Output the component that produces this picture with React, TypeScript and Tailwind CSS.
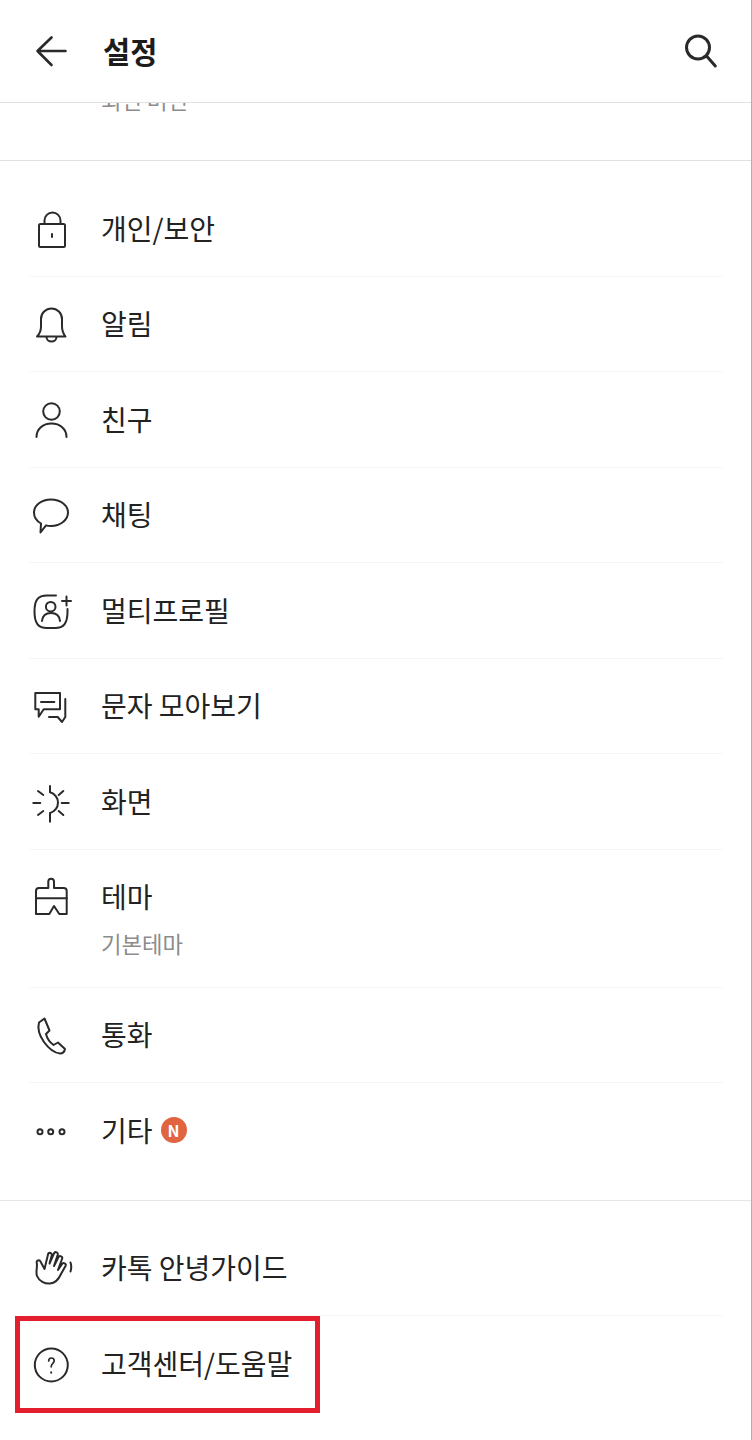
import React from 'react';

const FONT = "font-['Noto_Sans_CJK_KR','Noto_Sans',sans-serif]";

function Icon({ children }: { children: React.ReactNode }) {
  return (
    <svg width="40" height="40" viewBox="0 0 40 40" fill="none" stroke="#2a2a2a" strokeWidth="2" strokeLinecap="round" strokeLinejoin="round" className="shrink-0 overflow-visible">
      {children}
    </svg>
  );
}

const icons = {
  lock: (
    <>
      <rect x="8" y="15" width="26" height="23" rx="1.5" />
      <path d="M13.500 15v-3.500a8 8 0 0 1 16 0V15" />
      <path d="M21 25v3" />
    </>
  ),
  bell: (
    <>
      <path d="M6 32.5c2.5-2.5 4-6 4-10V15a10.5 10.5 0 0 1 21 0v7.500c0 4 1.500 7.500 3.500 10z" />
      <path d="M15.500 33a5 4.500 0 0 0 10 0" />
    </>
  ),
  person: (
    <>
      <circle cx="20.500" cy="11.500" r="8.300" />
      <path d="M5.500 37c0-8 6.500-13.500 15-13.500s15 5.500 15 13.500" />
    </>
  ),
  chat: <path d="M9.500 37.500 10 28.500C5.500 26 3 22 3 17.500 3 10.200 10.500 4.500 20 4.500s17 5.700 17 13-7.500 13.500-17 13.500c-1.800 0-3.500-.2-5-.6z" />,
  multi: (
    <>
      <path d="M25 4.500H16C7 4.500 3.500 9 3.500 20.500 3.500 32 7 37 16 37h8c9 0 12.500-5 12.500-16.500V18" />
      <path d="M35.500 5.500v9M31 10h9" />
      <circle cx="19.700" cy="15.700" r="4.800" />
      <path d="M11 30c.5-5 4-8 9-8s8.500 3 9 8" />
    </>
  ),
  message: (
    <>
      <path d="M4.300 7H29v16.300H12.700l-5 7.400V23.300H4.300z" />
      <path d="M10 16h13.300" />
      <path d="M34.300 13v18l-3.300 5-4.300-5H18" />
    </>
  ),
  sun: (
    <>
      <path d="M19 4v6.300a10.700 10.700 0 0 1 0 20.700V39.700" />
      <path d="M30.700 21h7M27.700 13l4.600-4M27.700 29l4.600 4M2.300 21h7M7 9l5.300 4M7 33l5.300-4" />
    </>
  ),
  brush: (
    <>
      <path d="M5 37V14a3 3 0 0 1 3-3h9.300V4.500a2.850 2.850 0 0 1 5.700 0V11h9.700a3 3 0 0 1 3 3v23h-7.400L23 29l-4.700 8z" />
      <path d="M5 21.300h30.700" />
    </>
  ),
  phone: <path d="M13.500 3.500 8 7.500C6.500 13 8 20 13 27c5 7 11 11 16 11.500 2.500 0 4.500-2 5-4.500l-7-6.500-4.500 2.500c-3.500-2.500-6.500-7-7.500-11l3.500-3.500z" />,
  dots: (
    <>
      <circle cx="9" cy="20.700" r="2.500" />
      <circle cx="19.700" cy="20.700" r="2.500" />
      <circle cx="31" cy="20.700" r="2.500" />
    </>
  ),
  hand: (
    <>
      <path d="M13.500 21 9.500 13.500a2 2 0 0 0-3.700 1.500C6.500 20 4.500 24 6 28c2 5 8 8 13 7.500 6-.5 9-5 11-9.500l4.500-8a2 2 0 0 0-3.600-1.800L27 22l4-11a2 2 0 0 0-3.600-1.800L23 18l3.800-11.500a2 2 0 0 0-3.600-1.500L18.500 15.500 20.800 7a2 2 0 0 0-3.600-1.300z" />
      <path d="M39.500 14.500c1 3 1 6 0 9" />
    </>
  ),
  help: (
    <>
      <circle cx="20.300" cy="21" r="16.500" />
      <path d="M17.700 17c0-2 1.200-3 2.800-3s2.700 1.200 2.700 2.800c0 2.700-3 2.700-3 6" strokeWidth="1.700" />
      <path d="M20.200 28.300v.4" strokeWidth="1.900" />
    </>
  ),
};

function Row({ icon, label, sub, badge, last }: {
  icon: React.ReactNode;
  label: string;
  sub?: string;
  badge?: boolean;
  last?: boolean;
}) {
  return (
    <div className={`ml-[29px] mr-[28px] flex items-start gap-[30px] pl-[2px] pt-[27.5px] pb-[27px] ${last ? '' : 'border-b border-[#f5f5f5]'}`}>
      <Icon>{icon}</Icon>
      <div className="flex min-w-0 flex-col">
        <div className="flex h-10 items-center gap-[8px] pb-[2px]">
          <span className="text-[28px] leading-10 text-[#222222]">{label}</span>
          {badge && (
            <span className="flex h-[26px] w-[26px] items-center justify-center rounded-full bg-[#e0643f] text-[16px] font-bold leading-none text-white">N</span>
          )}
        </div>
        {sub && <div className="mt-[10.5px] mb-[2px] text-[22.3px] leading-[30px] text-[#8c8c8c]">{sub}</div>}
      </div>
    </div>
  );
}

export default function App() {
  return (
    <div className={`${FONT} relative h-[1440px] w-[752px] overflow-hidden border-r border-[#b0b0b0] bg-white`}>
      {/* Header */}
      <div className="flex h-[103px] items-center justify-between border-b border-[#e0e0e0] pl-[31px] pr-[30px]">
        <div className="flex items-center gap-[32px]">
          <Icon>
            <path d="M20.500 6.500 6.500 20l14 14M6.500 20h28" strokeWidth="2.600" />
          </Icon>
          <span className="pb-[2px] text-[29.5px] font-bold leading-10 text-[#1c1c1c]">설정</span>
        </div>
        <Icon>
          <circle cx="17" cy="16.500" r="11.500" strokeWidth="3" />
          <path d="m26 25.500 8.300 9.500" strokeWidth="3" />
        </Icon>
      </div>

      {/* Scrolled-off row, clipped under the header */}
      <div className="h-[58px] overflow-hidden border-b border-[#e0e0e0] pl-[101px]">
        <div className="-mt-[19px] text-[22.3px] leading-[30px] text-[#8c8c8c]">최신 버전</div>
      </div>

      <div className="border-b border-[#e6e6e6] pt-5 pb-[22px]">
        <Row icon={icons.lock} label="개인/보안" />
        <Row icon={icons.bell} label="알림" />
        <Row icon={icons.person} label="친구" />
        <Row icon={icons.chat} label="채팅" />
        <Row icon={icons.multi} label="멀티프로필" />
        <Row icon={icons.message} label="문자 모아보기" />
        <Row icon={icons.sun} label="화면" />
        <Row icon={icons.brush} label="테마" sub="기본테마" />
        <Row icon={icons.phone} label="통화" />
        <Row icon={icons.dots} label="기타" badge last />
      </div>

      <div className="pt-5">
        <Row icon={icons.hand} label="카톡 안녕가이드" />
        <Row icon={icons.help} label="고객센터/도움말" last />
      </div>

      {/* Red annotation box */}
      <div className="absolute left-[15px] top-[1316px] h-[97px] w-[305px] border-[5px] border-[#e31e2d]" />
    </div>
  );
}
